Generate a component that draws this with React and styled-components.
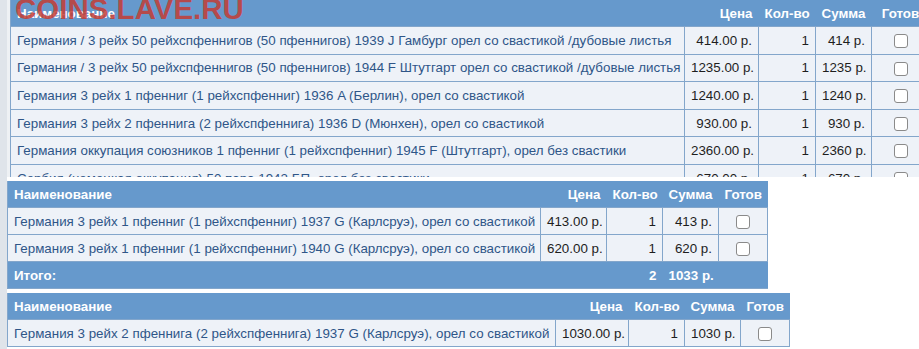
import React from "react";
import styled, { createGlobalStyle } from "styled-components";

// basket tables, three screenshots stacked

const topRows = [
   { name: "Германия / 3 рейх 50 рейхспфеннигов (50 пфеннигов) 1939 J Гамбург орел со свастикой /дубовые листья", price: "414.00 р.", qty: 1, sum: "414 р." },
   { name: "Германия / 3 рейх 50 рейхспфеннигов (50 пфеннигов) 1944 F Штутгарт орел со свастикой /дубовые листья", price: "1235.00 р.", qty: 1, sum: "1235 р." },
   { name: "Германия 3 рейх 1 пфенниг (1 рейхспфенниг) 1936 A (Берлин), орел со свастикой", price: "1240.00 р.", qty: 1, sum: "1240 р." },
   { name: "Германия 3 рейх 2 пфеннига (2 рейхспфеннига) 1936 D (Мюнхен), орел со свастикой", price: "930.00 р.", qty: 1, sum: "930 р." },
   { name: "Германия оккупация союзников 1 пфенниг (1 рейхспфенниг) 1945 F (Штутгарт), орел без свастики", price: "2360.00 р.", qty: 1, sum: "2360 р." },
   { name: "Сербия (немецкая оккупация) 50 пара 1942 БП, орел без свастики", price: "670.00 р.", qty: 1, sum: "670 р." },
];

const midRows = [
   { name: "Германия 3 рейх 1 пфенниг (1 рейхспфенниг) 1937 G (Карлсруэ), орел со свастикой", price: "413.00 р.", qty: 1, sum: "413 р." },
   { name: "Германия 3 рейх 1 пфенниг (1 рейхспфенниг) 1940 G (Карлсруэ), орел со свастикой", price: "620.00 р.", qty: 1, sum: "620 р." },
];

const lastRows = [
   { name: "Германия 3 рейх 2 пфеннига (2 рейхспфеннига) 1937 G (Карлсруэ), орел со свастикой", price: "1030.00 р.", qty: 1, sum: "1030 р." },
];

const BasketTable = ({ cols, rows, total, rowHeight }) => (
   <Table style={{ width: cols.reduce((a, b) => a + b, 0) }} rowHeight={rowHeight}>
      <colgroup>
         {cols.map((w, i) => (
            <col key={i} style={{ width: w }} />
         ))}
      </colgroup>
      <thead>
         <tr>
            <Th>Наименование</Th>
            <Th align="right">Цена</Th>
            <Th align="center">Кол-во</Th>
            <Th align="center">Сумма</Th>
            <Th align="center">Готов</Th>
         </tr>
      </thead>
      <tbody>
         {rows.map((r, i) => (
            <tr key={i}>
               <Td>
                  <ItemLink>{r.name}</ItemLink>
               </Td>
               <Td num>{r.price}</Td>
               <Td num>{r.qty}</Td>
               <Td num>{r.sum}</Td>
               <Td align="center">
                  <Check />
               </Td>
            </tr>
         ))}
         {total && (
            <tr>
               <Th>Итого:</Th>
               <Th />
               <Th align="right">{total.qty}</Th>
               <Th align="right">{total.sum}</Th>
               <Th />
            </tr>
         )}
      </tbody>
   </Table>
);

export default function App() {
   return (
      <>
         <GlobalStyle />
         <Page>
            <TopShot>
               <Watermark>COINS.LAVE.RU</Watermark>
               <BasketTable cols={[674, 74, 57, 56, 58]} rows={topRows} rowHeight={26.6} />
            </TopShot>
            <Shot width={760}>
               <BasketTable cols={[533, 66, 56, 56, 49]} rows={midRows} total={{ qty: 2, sum: "1033 р." }} />
            </Shot>
            <Shot width={782}>
               <BasketTable cols={[548, 73, 56, 56, 49]} rows={lastRows} />
            </Shot>
         </Page>
      </>
   );
}

// CSS styles

const GlobalStyle = createGlobalStyle`
   body {
      margin: 0;
      background: #ffffff;
      font-family: "Liberation Sans", Arial, sans-serif;
   }
`;

const Page = styled.div`
   width: 919px;
   height: 349px;
   overflow: hidden;
   display: flex;
   flex-direction: column;
   gap: 4px;
   background: linear-gradient(90deg, #dfe4ea 0, #dfe4ea 7px, #ffffff 7px);
`;

const TopShot = styled.div`
   position: relative;
   height: 177px;
   overflow: hidden;
   padding-left: 3px;
   margin-left: 7px;
   background: #eef1f4;
   flex-shrink: 0;
`;

const Watermark = styled.span`
   position: absolute;
   left: 8px;
   top: -8px;
   font-size: 29.5px;
   font-weight: bold;
   color: rgba(196, 60, 52, 0.85);
   z-index: 2;
`;

const Shot = styled.div`
   margin-left: 7px;
   width: ${(p) => p.width}px;
   flex-shrink: 0;
`;

const Table = styled.table`
   border-collapse: collapse;
   table-layout: fixed;
   font-size: 13.35px;
   background: #eef2f8;
   border-left: 1px solid #83a6cb;

   tbody td {
      height: ${(p) => p.rowHeight || 26}px;
   }
`;

const Th = styled.th`
   background: #6699cc;
   color: #ffffff;
   font-weight: bold;
   text-align: ${(p) => p.align || "left"};
   height: 26px;
   padding: 0 6px;
   white-space: nowrap;
   border-bottom: 1px solid #83a6cb;
`;

const Td = styled.td`
   padding: 0 6px;
   border: 1px solid #83a6cb;
   text-align: ${(p) => (p.num ? "right" : p.align || "left")};
   color: #1e1e1e;
   white-space: nowrap;
   overflow: hidden;
`;

const ItemLink = styled.span`
   color: #2f5688;
`;

const Check = styled.span`
   display: inline-block;
   width: 12px;
   height: 12px;
   border: 1px solid #8a8a8a;
   border-radius: 3px;
   background: #ffffff;
   vertical-align: middle;
`;
